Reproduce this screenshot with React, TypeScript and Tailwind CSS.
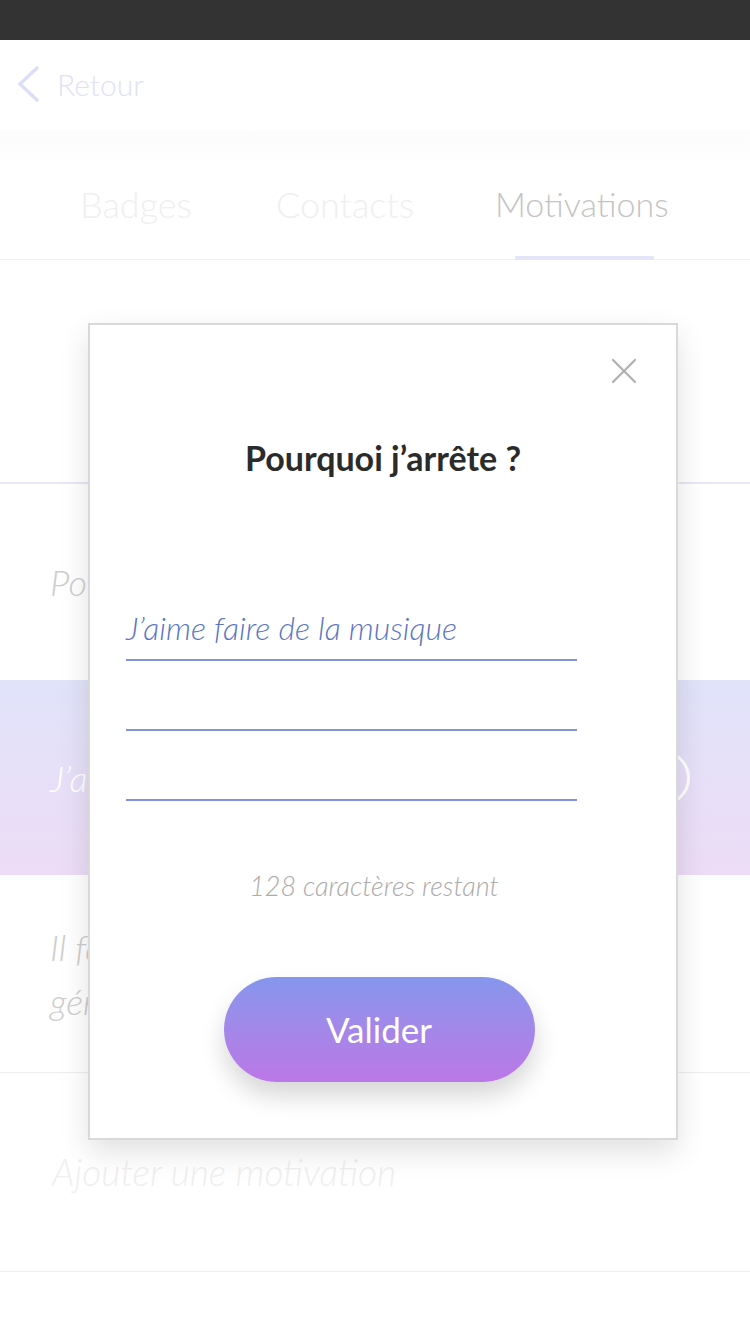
import { FC } from "react";

const font = { fontFamily: "Lato, 'Open Sans', sans-serif" };

const App: FC = () => {
  return (
    <div className="relative h-[1334px] w-[750px] overflow-hidden bg-white" style={font}>
      {/* status bar */}
      <div className="h-10 bg-[#333333]" />

      {/* header */}
      <div className="flex h-[90px] items-center gap-[18px] pb-[2px] pl-[17px]">
        <svg width="22" height="36" viewBox="0 0 22 36" fill="none">
          <path d="M20 2 L3 18 L20 34" stroke="#dcdff8" strokeWidth="3.5" strokeLinecap="round" strokeLinejoin="round" />
        </svg>
        <span className="text-[30px] font-light text-[#e0e1f8]">Retour</span>
      </div>
      <div className="h-[30px] bg-gradient-to-b from-[#fcfcfc] to-[#fefefe]" />

      {/* tabs */}
      <div className="relative flex h-[100px] items-center border-b border-[#f3f3f3] pb-[12px] pl-[80px]">
        <span className="text-[36px] font-light text-[#efefef]">Badges</span>
        <span className="ml-[84px] text-[36px] font-light text-[#efefef]">Contacts</span>
        <span className="ml-[81px] text-[34px] font-light text-[#c4c4c4]">Motivations</span>
        <div className="absolute bottom-[-1px] left-[515px] h-[4px] w-[139px] bg-[#e4e5f7]" />
      </div>

      <div className="h-[224px] border-b-2 border-[#e8e8f5]" />

      {/* motivations list */}
      <div className="flex h-[196px] items-center px-[50px]">
        <span className="text-[36px] font-light italic text-[#cdcdcd]">Pour ma santé</span>
      </div>
      <div className="flex h-[195px] items-center justify-between bg-gradient-to-b from-[#e0e3fa] to-[#eddcf6] pl-[50px] pr-[60px]">
        <span className="text-[36px] font-light italic text-white">J’aime faire de la musique</span>
        <div className="h-[56px] w-[56px] rounded-full border-[3px] border-white" />
      </div>
      <div className="flex h-[198px] items-center border-b border-[#eeeeee] px-[50px]">
        <span className="text-[36px] font-light italic leading-[54px] text-[#cdcdcd]">
          Il faut que je reste en forme pour
          <br />
          génération future
        </span>
      </div>
      <div className="flex h-[199px] items-center border-b border-[#eeeeee] px-[52px]">
        <span className="text-[37px] font-light italic text-[#efefef]">Ajouter une motivation</span>
      </div>

      {/* modal */}
      <div className="absolute left-[88px] top-[323px] h-[817px] w-[590px] border-2 border-[#d9d9d9] bg-white shadow-[0_12px_28px_rgba(0,0,0,0.12)]">
        <button className="absolute right-[38px] top-[32px]">
          <svg width="28" height="28" viewBox="0 0 28 28">
            <path d="M3 3 L25 25 M25 3 L3 25" stroke="#b0b0b0" strokeWidth="2.2" strokeLinecap="round" />
          </svg>
        </button>

        <h2 className="mt-[113px] text-center text-[34px] font-bold leading-10 text-[#2b2b2b]">
          Pourquoi j’arrête ?
        </h2>

        <div className="mt-[113px] ml-[36px] w-[451px]">
          <div className="flex h-[70px] items-end border-b-2 border-[#8392dc] pb-[11px]">
            <span className="text-[32px] font-light italic leading-10 text-[#5b76c2]">J’aime faire de la musique</span>
          </div>
          <div className="h-[70px] border-b-2 border-[#8392dc]" />
          <div className="h-[70px] border-b-2 border-[#8392dc]" />
        </div>

        <p className="mt-[70px] pr-[18px] text-center text-[27px] font-light italic leading-[30px] text-[#ababab]">
          128 caractères restant
        </p>

        <div className="mt-[76px] flex justify-center pr-[8px]">
          <button className="h-[105px] w-[311px] rounded-full bg-gradient-to-b from-[#8596ec] to-[#bb77e6] text-[35px] font-normal text-white shadow-[0_14px_24px_rgba(0,0,0,0.16)]">
            Valider
          </button>
        </div>
      </div>
    </div>
  );
};

export default App;
